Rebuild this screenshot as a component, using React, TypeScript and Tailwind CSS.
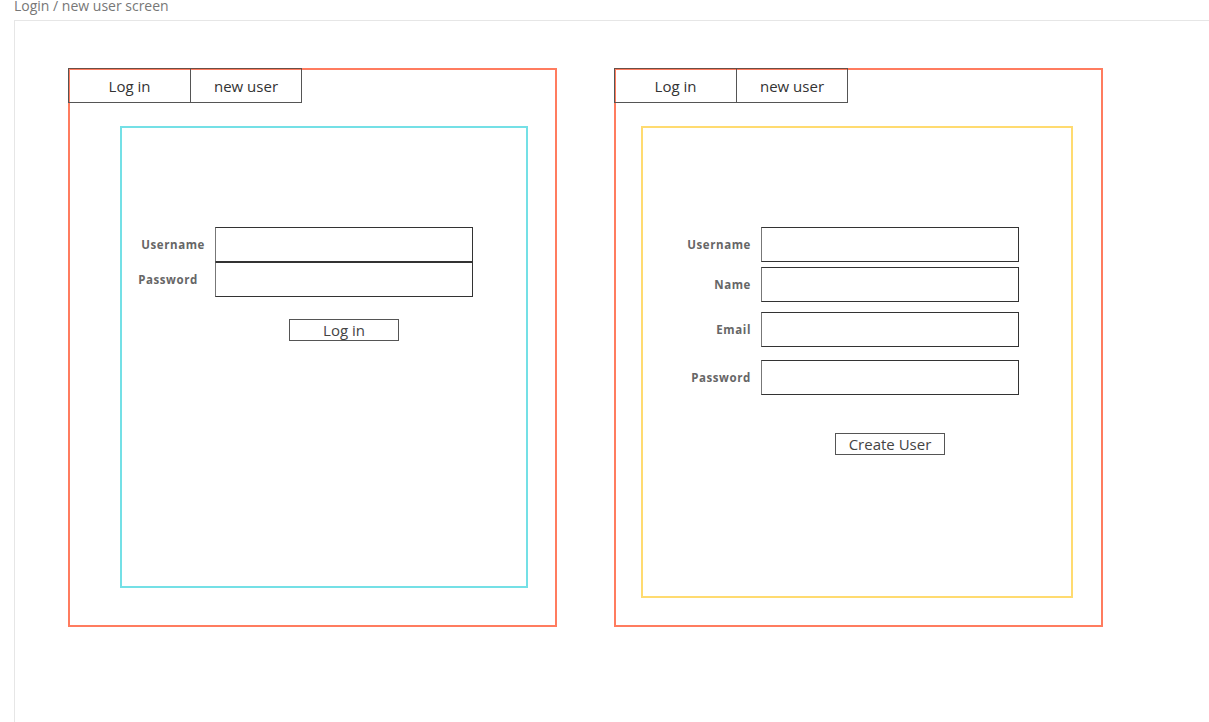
import React from "react";

const font = { fontFamily: '"Open Sans", "Liberation Sans", sans-serif' };

function Tabs() {
  return (
    <div className="flex -ml-[2px] -mt-[2px]">
      <div className="w-[123px] h-[35px] pt-[1px] border border-[#555] border-t-[#6b4f45] flex items-center justify-center text-[15px] text-[#333]">
        Log in
      </div>
      <div className="w-[111px] h-[35px] pt-[1px] border border-l-0 border-[#555] border-t-[#6b4f45] flex items-center justify-center text-[15px] text-[#333]">
        new user
      </div>
    </div>
  );
}

function Label({ children, w }: { children: React.ReactNode; w: string }) {
  return (
    <div className={`${w} text-right text-[11.5px] font-bold tracking-[0.6px] text-[#666] shrink-0`}>
      {children}
    </div>
  );
}

function Input() {
  return <div className="w-[258px] h-[35px] border border-[#333] border-l-[#777] bg-white" />;
}

function Button({ children }: { children: React.ReactNode }) {
  return (
    <div className="w-[110px] h-[22px] border border-[#555] flex items-center justify-center text-[15px] text-[#444] leading-none">
      {children}
    </div>
  );
}

export default function App() {
  return (
    <div className="w-[1209px] h-[722px] overflow-hidden bg-white" style={font}>
      <div className="pl-[14px] text-[14px] leading-[20px] text-[#777] -mt-[4px] h-[24px]">
        Login / new user screen
      </div>
      <div className="ml-[14px] border-t border-l border-[#e6e6e6] h-[702px] pl-[53px] pt-[47px] flex gap-[57px]">
        {/* Left frame */}
        <div className="w-[489px] h-[559px] border-2 border-[#ff7c5f] shrink-0 flex flex-col">
          <Tabs />
          <div className="ml-[50px] mt-[23px] w-[408px] h-[462px] border-2 border-[#74e0e6] flex flex-col pt-[99px]">
            <div className="flex items-center">
              <Label w="w-[83px]">Username</Label>
              <div className="ml-[10px]"><Input /></div>
            </div>
            <div className="flex items-center">
              <Label w="w-[76px]">Password</Label>
              <div className="ml-[17px]"><Input /></div>
            </div>
            <div className="ml-[167px] mt-[22px]">
              <Button>Log in</Button>
            </div>
          </div>
        </div>
        {/* Right frame */}
        <div className="w-[489px] h-[559px] border-2 border-[#ff7c5f] shrink-0 flex flex-col">
          <Tabs />
          <div className="ml-[25px] mt-[23px] w-[432px] h-[472px] border-2 border-[#ffdb70] flex flex-col pt-[99px]">
            <div className="flex items-center">
              <Label w="w-[108px]">Username</Label>
              <div className="ml-[10px]"><Input /></div>
            </div>
            <div className="flex items-center mt-[5px]">
              <Label w="w-[108px]">Name</Label>
              <div className="ml-[10px]"><Input /></div>
            </div>
            <div className="flex items-center mt-[10px]">
              <Label w="w-[108px]">Email</Label>
              <div className="ml-[10px]"><Input /></div>
            </div>
            <div className="flex items-center mt-[13px]">
              <Label w="w-[108px]">Password</Label>
              <div className="ml-[10px]"><Input /></div>
            </div>
            <div className="ml-[192px] mt-[38px]">
              <Button>Create User</Button>
            </div>
          </div>
        </div>
      </div>
    </div>
  );
}
